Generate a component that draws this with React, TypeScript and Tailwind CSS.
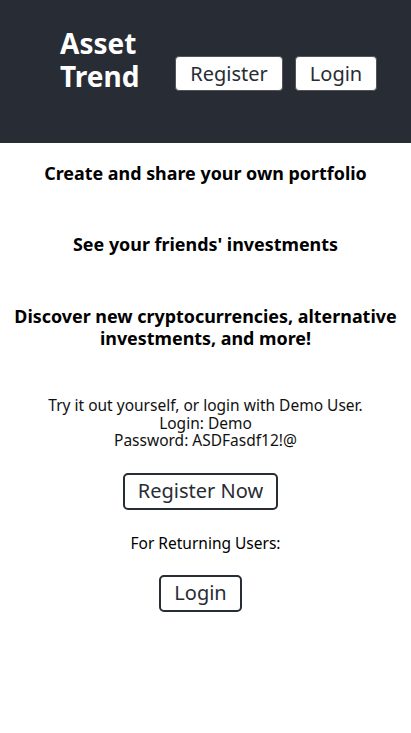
import React from "react";

export default function App() {
  return (
    <div className="min-h-[733px] bg-white text-black" style={{ fontFamily: '"Noto Sans", "Open Sans", sans-serif' }}>
      <header className="h-[143px] bg-[#282c34] flex items-start pl-[60px] pt-[27px]">
        <div className="text-white font-bold text-[28px] leading-[33px] w-[78px]">
          <div>Asset</div>
          <div>Trend</div>
        </div>
        <div className="flex items-center gap-[12px] ml-[37px] mt-[29px]">
          <button className="h-[35px] w-[108px] bg-white text-[#282c34] text-[20px] rounded-[4px] border border-[#555] leading-none">Register</button>
          <button className="h-[35px] w-[82px] bg-white text-[#282c34] text-[20px] rounded-[4px] border border-[#555] leading-none">Login</button>
        </div>
      </header>
      <main className="flex flex-col items-center text-center px-2">
        <h3 className="mt-[20px] font-bold text-[17.9px] leading-[21px]">Create and share your own portfolio</h3>
        <h3 className="mt-[50px] font-bold text-[17.9px] leading-[21px]">See your friends' investments</h3>
        <h3 className="mt-[50px] font-bold text-[17.9px] leading-[22px]">Discover new cryptocurrencies, alternative investments, and more!</h3>
        <div className="mt-[48px] text-[15.5px] leading-[17.5px] text-[#111]">
          <div>Try it out yourself, or login with Demo User.</div>
          <div>Login: Demo</div>
          <div>Password: ASDFasdf12!@</div>
        </div>
        <button className="mt-[23px] mr-[10px] h-[37px] w-[155px] border-2 border-[#282c34] rounded-[5px] bg-white text-[20px] text-[#282c34] leading-none">Register Now</button>
        <div className="mt-[24px] text-[15.5px] leading-[18px]">For Returning Users:</div>
        <button className="mt-[23px] mr-[10px] h-[37px] w-[83px] border-2 border-[#282c34] rounded-[5px] bg-white text-[20px] text-[#282c34] leading-none">Login</button>
      </main>
    </div>
  );
}
